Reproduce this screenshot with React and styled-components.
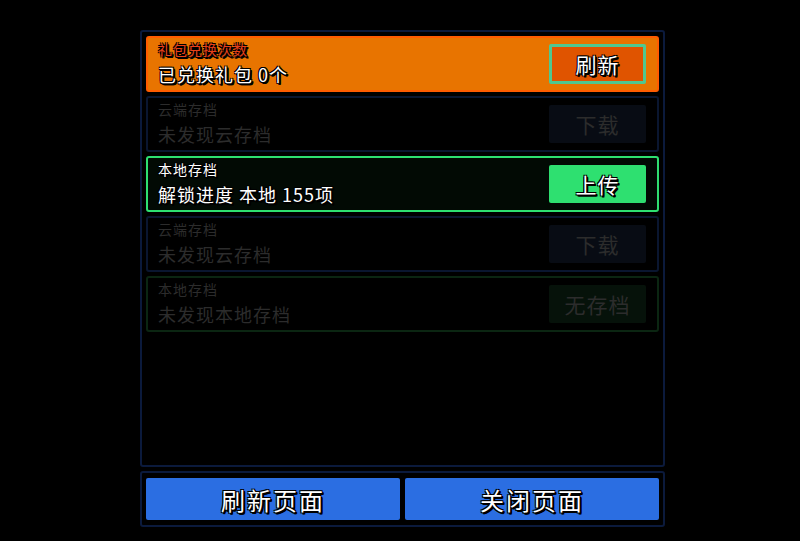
import React from "react";
import styled, { createGlobalStyle } from "styled-components";

const GlobalStyle = createGlobalStyle`
  html, body {
    margin: 0;
    padding: 0;
    background: #000;
  }
  body {
    font-family: "Noto Sans CJK SC", "Noto Sans", sans-serif;
  }
`;

const outline = `
  -1px -1px 0 #000, 1px -1px 0 #000, -1px 1px 0 #000, 1px 1px 0 #000,
  2px 2px 0 #000, 1px 2px 0 #000, 2px 1px 0 #000
`;

const Page = styled.div`
  width: 800px;
  height: 541px;
  padding: 30px 0 0 140px;
  box-sizing: border-box;
  display: flex;
  flex-direction: column;
  gap: 4px;
`;

const Panel = styled.div`
  width: 525px;
  box-sizing: border-box;
  border: 2px solid #0b1a3c;
  border-radius: 3px;
  padding: 4px;
  display: flex;
  flex-direction: ${(p) => (p.$row ? "row" : "column")};
  gap: ${(p) => (p.$row ? "5px" : "4px")};
  height: ${(p) => p.$height}px;
`;

const tones = {
  gift: { bg: "#e87400", border: "#ff5c00", title: "#e8401a", text: "#fff" },
  cloud: { bg: "#000", border: "#0a1630", title: "#2c2c2c", text: "#2c2c2c" },
  local: { bg: "#020a04", border: "#2ee070", title: "#fff", text: "#fff" },
  localOff: { bg: "#000", border: "#0b2612", title: "#2c2c2c", text: "#2c2c2c" },
};

const Card = styled.div`
  height: 56px;
  box-sizing: border-box;
  border: 2px solid ${(p) => tones[p.$tone].border};
  border-radius: 3px;
  background: ${(p) => tones[p.$tone].bg};
  display: flex;
  align-items: center;
  padding: 0 11px 0 10px;
  flex-shrink: 0;
`;

const Info = styled.div`
  flex: 1;
  align-self: stretch;
  display: flex;
  flex-direction: column;
  padding-top: 3px;
`;

const Title = styled.span`
  font-size: 14px;
  line-height: 16px;
  letter-spacing: 1px;
  color: ${(p) => tones[p.$tone].title};
  text-shadow: ${(p) => (p.$dim ? "none" : outline)};
`;

const Value = styled.span`
  margin-top: 4px;
  font-size: 18px;
  line-height: 26px;
  letter-spacing: 1px;
  color: ${(p) => tones[p.$tone].text};
  text-shadow: ${(p) => (p.$dim ? "none" : outline)};
`;

const buttons = {
  refresh: { bg: "#e05400", border: "3px solid #4fc890", color: "#fff", h: 40 },
  upload: { bg: "#2ee070", border: "none", color: "#fff", h: 38 },
  download: { bg: "#080c14", border: "none", color: "#2c2c2c", h: 38 },
  none: { bg: "#06120a", border: "none", color: "#2c2c2c", h: 38 },
};

const ActionButton = styled.div`
  width: 97px;
  height: ${(p) => buttons[p.$kind].h}px;
  box-sizing: border-box;
  border-radius: 2px;
  background: ${(p) => buttons[p.$kind].bg};
  border: ${(p) => buttons[p.$kind].border};
  color: ${(p) => buttons[p.$kind].color};
  display: flex;
  align-items: center;
  justify-content: center;
  font-size: 21px;
  letter-spacing: 1px;
  text-shadow: ${(p) => (p.$kind === "download" || p.$kind === "none" ? "none" : outline)};
`;

const BigButton = styled.div`
  flex: 1;
  height: 42px;
  margin-top: 1px;
  border-radius: 2px;
  background: #2b6ee2;
  color: #fff;
  font-size: 24px;
  letter-spacing: 2px;
  display: flex;
  align-items: center;
  justify-content: center;
  text-shadow: ${outline};
`;

const rows = [
  { tone: "gift", title: "礼包兑换次数", value: "已兑换礼包 0个", button: "refresh", label: "刷新" },
  { tone: "cloud", title: "云端存档", value: "未发现云存档", button: "download", label: "下载", dim: true },
  { tone: "local", title: "本地存档", value: "解锁进度 本地 155项", button: "upload", label: "上传" },
  { tone: "cloud", title: "云端存档", value: "未发现云存档", button: "download", label: "下载", dim: true },
  { tone: "localOff", title: "本地存档", value: "未发现本地存档", button: "none", label: "无存档", dim: true },
];

export default function App() {
  return (
    <>
      <GlobalStyle />
      <Page>
        <Panel $height={437}>
          {rows.map((r, i) => (
            <Card key={i} $tone={r.tone}>
              <Info>
                <Title $tone={r.tone} $dim={r.dim}>{r.title}</Title>
                <Value $tone={r.tone} $dim={r.dim}>{r.value}</Value>
              </Info>
              <ActionButton $kind={r.button}>{r.label}</ActionButton>
            </Card>
          ))}
        </Panel>
        <Panel $row $height={56}>
          <BigButton>刷新页面</BigButton>
          <BigButton>关闭页面</BigButton>
        </Panel>
      </Page>
    </>
  );
}
